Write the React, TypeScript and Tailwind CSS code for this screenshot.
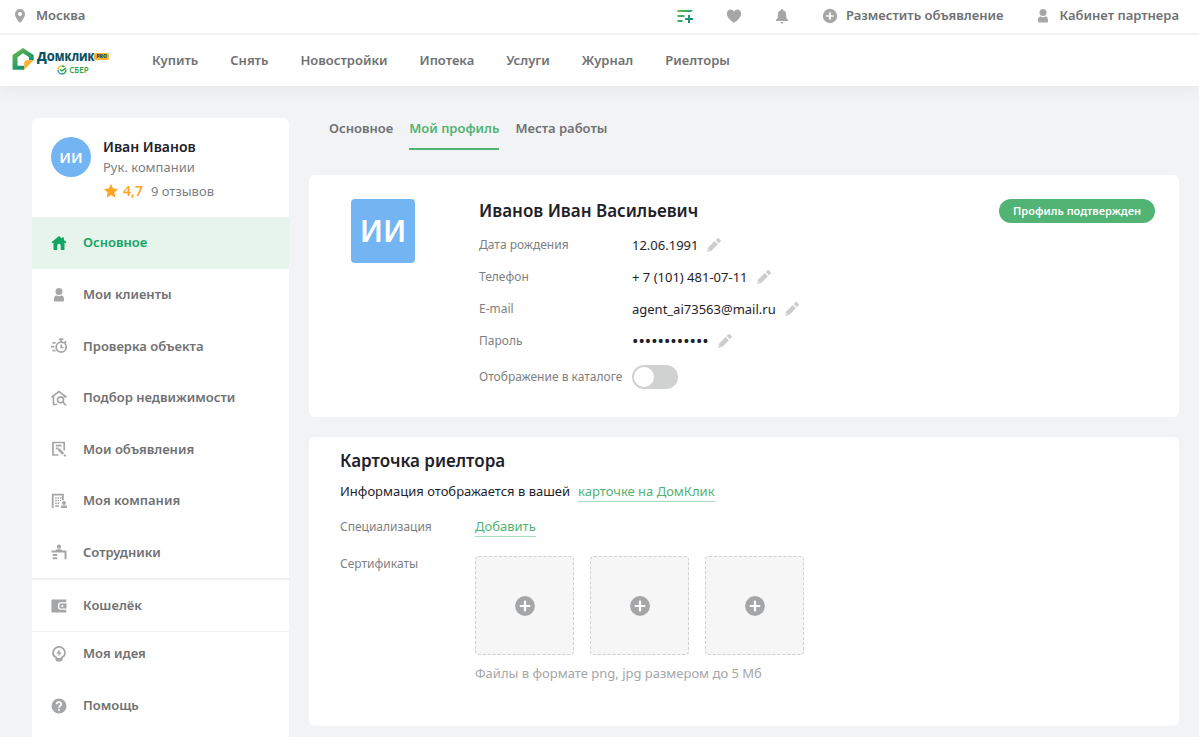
// React Imports
import type { ReactNode } from 'react';

const topLinks = ['Купить', 'Снять', 'Новостройки', 'Ипотека', 'Услуги', 'Журнал', 'Риелторы'];

const Svg = ({ children, className = 'size-4' }: { children: ReactNode; className?: string }) => (
  <svg viewBox="0 0 16 16" fill="currentColor" className={`shrink-0 ${className}`} aria-hidden="true">
    {children}
  </svg>
);

// Icons
const PinIcon = () => (
  <Svg>
    <path fillRule="evenodd" d="M8 1a5 5 0 0 0-5 5c0 3.6 3.6 7.4 5 9 1.4-1.6 5-5.4 5-9a5 5 0 0 0-5-5Zm0 3a2 2 0 1 1 0 4 2 2 0 0 1 0-4Z" />
  </Svg>
);

const UserIcon = () => (
  <Svg>
    <circle cx="8" cy="4.6" r="3.5" />
    <path d="M3 12.2C3 10.2 3.8 9 5.3 8.3 6.8 9.6 9.2 9.6 10.7 8.3 12.2 9 13 10.2 13 12.2v1c0 .7-.6 1.3-1.3 1.3H4.3c-.7 0-1.3-.6-1.3-1.3Z" />
  </Svg>
);

const PlusCircleIcon = ({ className = 'size-4' }: { className?: string }) => (
  <Svg className={className}>
    <circle cx="8" cy="8" r="7.2" />
    <path d="M8 4.8v6.4M4.8 8h6.4" stroke="#fff" strokeWidth="1.6" strokeLinecap="round" />
  </Svg>
);

const CompareIcon = () => (
  <svg viewBox="0 0 18 16" className="h-4 w-4.5" fill="none" strokeWidth="2" aria-hidden="true">
    <defs>
      <linearGradient id="compare" x1="0" y1="0" x2="18" y2="16" gradientUnits="userSpaceOnUse">
        <stop stopColor="#7fc241" />
        <stop offset="0.5" stopColor="#2ea86a" />
        <stop offset="1" stopColor="#0971a8" />
      </linearGradient>
    </defs>
    <path d="M1.5 3h14v.01M1.5 8h7M1.5 13h5M9 11h8M13 7v8" stroke="url(#compare)" />
  </svg>
);

const HeartIcon = () => (
  <Svg>
    <path d="M8 15C5.5 13 .8 9.8.8 5.6.8 3.3 2.5 1.5 4.5 1.5 6 1.5 7.3 2.3 8 3.6c.7-1.3 2-2.1 3.5-2.1 2 0 3.7 1.8 3.7 4.1C15.2 9.8 10.5 13 8 15Z" />
  </Svg>
);

const BellIcon = () => (
  <Svg>
    <path d="M7 1h2v1.3c2 .5 3.2 2 3.2 4v3.4L14 12v1H2v-1l1.8-2.3V6.3c0-2 1.2-3.5 3.2-4ZM6.5 14h3a1.5 1.5 0 0 1-3 0Z" />
  </Svg>
);

const HomeIcon = () => (
  <Svg>
    <path d="M8 1 .8 7v1h1.7v7h3.8v-4.5a1.7 1.7 0 0 1 3.4 0V15h3.8V8h1.7V7l-2.3-1.9V2.5H11v1Z" />
  </Svg>
);

const TimerIcon = () => (
  <Svg>
    <g fill="none" stroke="currentColor" strokeWidth="1.8">
      <circle cx="10.2" cy="9.2" r="5" />
      <path strokeWidth="1.5" d="M10.2 6.5v2.9h2.3" />
      <path d="M8 1.2h4.4M10.2 1.2v3M1.5 4.8h3M0 8.7h3.4M1.5 12.7h3M13.6 3.4l1.5 1.5" />
    </g>
  </Svg>
);

const SearchHomeIcon = () => (
  <Svg>
    <g fill="none" stroke="currentColor" strokeWidth="1.7">
      <path d="M.5 7.2 8 1.6l7.5 5.6M2.5 6v8.5h3.8M13.5 5.7v1.8" />
      <circle cx="9.5" cy="9.8" r="3" />
      <path d="m11.6 11.9 3.4 3.4" />
    </g>
  </Svg>
);

const ListingIcon = () => (
  <Svg>
    <g fill="none" stroke="currentColor" strokeWidth="1.7">
      <path d="M7.5 14H2V1.5h11.2v8M4.8 4.6h5.8M4.8 7.4h2.7" />
      <path strokeWidth="2.6" d="m7.5 8.2 4.7 4.7" />
      <path d="m13 13.7 1.7 1.7" />
    </g>
  </Svg>
);

const CompanyIcon = () => (
  <Svg>
    <path d="M.8.8h12v6.4H11V2.6H2.6V15H.8Z" />
    <path d="M4.2 4.2h1.5v1.5H4.2Zm2.4 0h1.5v1.5H6.6ZM9 4.2h1.5v1.5H9ZM4.2 6.8h1.5v1.5H4.2Zm2.4 0h1.5v1.5H6.6ZM9 6.8h1.2v1.5H9ZM4.2 9.4h1.5v1.5H4.2Zm2.4 0h1.5v1.5H6.6ZM4.2 12.2h4v1.5h-4Z" />
    <circle cx="13" cy="10" r="1.9" />
    <path d="M10 12.5h6V15h-6Z" />
  </Svg>
);

const StaffIcon = () => (
  <Svg>
    <circle cx="8" cy="2.7" r="2.1" />
    <path d="M4.5 6.5C5.3 4.9 10.7 4.9 11.5 6.5h4v8.7h-2V8.5H.5v-2ZM1.7 10h4.5v2H1.7Zm0 3.3h4.5v2H1.7Z" />
  </Svg>
);

const WalletIcon = () => (
  <Svg>
    <path d="M1.3 1.5h14v2.7H9.8C8 4.2 7 5.5 7 7v2c0 1.6 1 2.8 2.8 2.8h5.5v2.7h-14c-.5 0-.9-.4-.9-.9V2.4c0-.5.4-.9.9-.9Z" />
    <path fillRule="evenodd" d="M9.9 5.4h5.6v5.2H9.9c-.9 0-1.5-.7-1.5-1.5V6.9c0-.9.6-1.5 1.5-1.5Zm.6 1.5v2.2h1.7V6.9Z" />
  </Svg>
);

const IdeaIcon = () => (
  <Svg>
    <path fill="none" stroke="currentColor" strokeWidth="1.7" d="M5.3 13.5v-2C3.2 10.5 2 8.8 2 6.9a6 6 0 0 1 12 0c0 1.9-1.2 3.6-3.3 4.6v2Z" />
    <path d="M4.8 12h6.4v1.8c0 1-.6 1.6-1.6 1.6H6.4c-1 0-1.6-.6-1.6-1.6ZM8.6 3.2 5.2 7.5h2.2v3.1l3.4-4.2H8.6Z" />
  </Svg>
);

const HelpIcon = () => (
  <Svg>
    <circle cx="8" cy="8" r="7.5" />
    <path fill="none" stroke="#fff" strokeWidth="1.8" d="M5.6 6.2C5.7 3.4 10.3 3.5 10.2 6.1 10.2 7.7 8 7.7 8 9.8M8 11v1.8" />
  </Svg>
);

const StarIcon = () => (
  <Svg>
    <path d="m8 .8 2.1 4.7 5.1.5-3.9 3.5 1.2 5.2L8 12l-4.5 2.7 1.2-5.2L.8 6l5.1-.5Z" />
  </Svg>
);

const PencilIcon = () => (
  <Svg>
    <path d="m1.2 14.8.8-4 6.7-6.7 3.2 3.2L5.2 14Zm8.5-11.7 1.7-1.7c.5-.5 1.1-.5 1.6 0L14.6 3c.5.5.5 1.1 0 1.6l-1.7 1.7Z" />
    <path d="m2.5 12.3 1.3 1.3" stroke="#fff" />
  </Svg>
);

const Logo = () => (
  <a href="#" aria-label="Домклик PRO Сбер" className="flex w-25 items-start gap-[3px] font-['Open_Sans',sans-serif]">
    <svg viewBox="0 0 22 23" className="h-6 w-5.5 shrink-0" aria-hidden="true">
      <defs>
        <linearGradient id="house" x1="2" y1="2" x2="18" y2="21" gradientUnits="userSpaceOnUse">
          <stop stopColor="#65b849" />
          <stop offset="1" stopColor="#07887c" />
        </linearGradient>
      </defs>
      <path d="M11 .5.5 7.5v14.7h11.7v-4H5.5V9.8L11 5.8l6 4v3h4.7V7.5Z" fill="url(#house)" />
      <path d="M12.2 22.2v-6.4c0-1.8 1.2-3 3-3h6.5Z" fill="#fbb034" />
    </svg>
    <span className="flex flex-col">
      <span className="mt-0.5 flex items-center">
        <span className="text-xs leading-4 font-extrabold text-[#0b5263]">
          Д<span className="text-[10px]">ОМКЛИК</span>
        </span>
        <span className="rounded-xs bg-[#fbb034] px-0.5 text-[5px] leading-[7px] font-extrabold text-[#0b5263]">PRO</span>
      </span>
      <span className="flex items-center gap-0.5 self-center text-[8px] leading-[10px] font-semibold text-[#27a343]">
        <svg viewBox="0 0 10 10" className="size-2.5" fill="none" strokeWidth="1.4" aria-hidden="true">
          <path d="M5 1a4 4 0 0 0-4 4" stroke="#f2c430" />
          <path d="M1 5a4 4 0 0 0 4 4" stroke="#2694d6" />
          <path d="M5 9a4 4 0 0 0 3.9-4.5M5 1a4 4 0 0 1 2.5.9M3 4.5l2 1.3 3.8-2.6" stroke="#27a343" />
        </svg>
        СБЕР
      </span>
    </span>
  </a>
);

const MenuItem = ({ icon, label, active }: { icon: ReactNode; label: string; active?: boolean }) => (
  <a
    href="#"
    className={`flex items-center gap-4 px-[19px] text-[13px] font-semibold ${
      active ? 'h-13 bg-[#e7f4eb] text-[#13a463]' : 'text-[#707173]'
    }`}
  >
    <span className={active ? 'text-[#13a463]' : 'text-[#a5a6a8]'}>{icon}</span>
    {label}
  </a>
);

const Field = ({ label, value, secret }: { label: string; value: string; secret?: boolean }) => (
  <div className="flex h-8 items-center">
    <dt className="w-[153px] shrink-0 text-xs text-[#7d7f82]">{label}</dt>
    <dd className="flex items-center gap-2 text-[13px] text-[#1f2229]">
      <span className={secret ? 'text-[17px] leading-5' : 'leading-5'}>{value}</span>
      <button type="button" aria-label={`Изменить: ${label}`} className="text-[#cbcccd]">
        <PencilIcon />
      </button>
    </dd>
  </div>
);

const App = () => {
  return (
    <div className="flex h-screen flex-col overflow-hidden bg-[#f2f3f5] font-['Noto_Sans',sans-serif]">
      {/* Header */}
      <header className="relative shrink-0 bg-white text-[13px] font-semibold text-[#707173] shadow-[0_2px_16px_rgba(0,0,0,0.06)]">
        <div className="flex h-[35px] items-center border-b-2 border-[#f1f2f3] pr-5 pb-0.5 pl-3">
          <a href="#" className="flex items-center gap-2">
            <span className="text-[#a5a6a8]"><PinIcon /></span>
            Москва
          </a>
          <div className="ml-auto flex items-center gap-8 text-[#a5a6a8]">
            <button type="button" aria-label="Сравнение"><CompareIcon /></button>
            <button type="button" aria-label="Избранное"><HeartIcon /></button>
            <button type="button" aria-label="Уведомления"><BellIcon /></button>
            <a href="#" className="flex items-center gap-2">
              <PlusCircleIcon />
              <span className="text-[#707173]">Разместить объявление</span>
            </a>
            <a href="#" className="flex items-center gap-2">
              <UserIcon />
              <span className="text-[#707173]">Кабинет партнера</span>
            </a>
          </div>
        </div>
        <div className="flex h-[51px] items-center gap-10 pl-3">
          <Logo />
          <nav className="flex gap-8">
            {topLinks.map((link) => (
              <a key={link} href="#">{link}</a>
            ))}
          </nav>
        </div>
      </header>

      <div className="flex min-h-0 flex-1 items-start gap-5 pt-8 pr-5 pl-8">
        {/* Sidebar */}
        <aside className="w-[257px] shrink-0 self-stretch rounded-t-md bg-white">
          <div className="flex h-[99px] items-start gap-3 px-[19px] pt-[19px]">
            <span className="flex size-10 items-center justify-center rounded-full bg-[#73b4f2] text-[15px] font-semibold text-white">
              ИИ
            </span>
            <div className="text-[13px] leading-5 text-[#7d7f82]">
              <p className="text-sm font-semibold text-[#1f2229]">Иван Иванов</p>
              <p>Рук. компании</p>
              <p className="mt-1 flex items-center gap-1">
                <span className="text-[#fba524]"><StarIcon /></span>
                <span className="text-sm font-semibold text-[#fba524]">4,7</span>
                <span className="ml-1">9 отзывов</span>
              </p>
            </div>
          </div>
          <nav>
            <MenuItem icon={<HomeIcon />} label="Основное" active />
            <div className="grid h-[309px] auto-rows-fr">
              <MenuItem icon={<UserIcon />} label="Мои клиенты" />
              <MenuItem icon={<TimerIcon />} label="Проверка объекта" />
              <MenuItem icon={<SearchHomeIcon />} label="Подбор недвижимости" />
              <MenuItem icon={<ListingIcon />} label="Мои объявления" />
              <MenuItem icon={<CompanyIcon />} label="Моя компания" />
              <MenuItem icon={<StaffIcon />} label="Сотрудники" />
            </div>
            <div className="grid h-[54px] border-t-2 border-b border-[#eff0f2]">
              <MenuItem icon={<WalletIcon />} label="Кошелёк" />
            </div>
            <div className="grid auto-rows-[44px] gap-2">
              <MenuItem icon={<IdeaIcon />} label="Моя идея" />
              <MenuItem icon={<HelpIcon />} label="Помощь" />
            </div>
          </nav>
        </aside>

        <main className="min-w-0 flex-1">
          {/* Tabs */}
          <nav className="mb-[25px] flex gap-4 px-5 text-[13px] leading-5 font-semibold text-[#707173]">
            <a href="#" className="h-8">Основное</a>
            <a href="#" className="h-8 border-b-2 border-[#51b374] text-[#51b374]">Мой профиль</a>
            <a href="#" className="h-8">Места работы</a>
          </nav>

          {/* Profile */}
          <section className="flex h-[242px] items-start rounded-md bg-white pt-6 pr-6 pl-[42px]">
            <span className="flex size-16 items-center justify-center rounded-sm bg-[#73b4f2] text-3xl font-semibold text-white">
              ИИ
            </span>
            <div className="ml-16">
              <h1 className="mb-1.5 text-[17px] leading-6 font-semibold text-[#1f2229]">Иванов Иван Васильевич</h1>
              <dl>
                <Field label="Дата рождения" value="12.06.1991" />
                <Field label="Телефон" value="+ 7 (101) 481-07-11" />
                <Field label="E-mail" value="agent_ai73563@mail.ru" />
                <Field label="Пароль" value="••••••••••••" secret />
              </dl>
              <label className="mt-1 flex h-8 items-center text-xs text-[#7d7f82]">
                <span className="w-[153px]">Отображение в каталоге</span>
                <input
                  type="checkbox"
                  role="switch"
                  className="h-6 w-[46px] appearance-none rounded-full bg-[#d0d2d2] p-0.5 before:block before:size-5 before:rounded-full before:bg-white checked:bg-[#51b374] checked:before:translate-x-5"
                />
              </label>
            </div>
            <span className="ml-auto rounded-full bg-[#51b374] px-3.5 text-[11px] leading-6 font-semibold text-white">
              Профиль подтвержден
            </span>
          </section>

          {/* Realtor card */}
          <section className="mt-5 h-[289px] rounded-md bg-white px-[31px] pt-3 text-[13px] leading-5 text-[#1f2229]">
            <h2 className="text-[17px] leading-6 font-semibold">Карточка риелтора</h2>
            <p className="mt-2">
              Информация отображается в вашей
              <a href="#" className="ml-2 inline-block border-b border-[#a9dcba] text-[#51b374]">карточке на ДомКлик</a>
            </p>
            <div className="mt-3.5 flex items-center">
              <span className="w-[135px] text-xs text-[#7d7f82]">Специализация</span>
              <button type="button" className="border-b border-[#a9dcba] text-[#51b374]">Добавить</button>
            </div>
            <div className="mt-[19px] flex">
              <span className="w-[135px] text-xs text-[#7d7f82]">Сертификаты</span>
              <div>
                <div className="flex gap-4">
                  {[1, 2, 3].map((n) => (
                    <button
                      key={n}
                      type="button"
                      aria-label={`Добавить сертификат ${n}`}
                      className="flex size-[99px] items-center justify-center rounded-sm border border-dashed border-[#cfd0d1] bg-[#f6f6f6] text-[#a5a6a8]"
                    >
                      <PlusCircleIcon className="size-[22px]" />
                    </button>
                  ))}
                </div>
                <p className="mt-2 text-[#a5a6a8]">Файлы в формате png, jpg размером до 5 Мб</p>
              </div>
            </div>
          </section>
        </main>
      </div>
    </div>
  );
};

export default App;
